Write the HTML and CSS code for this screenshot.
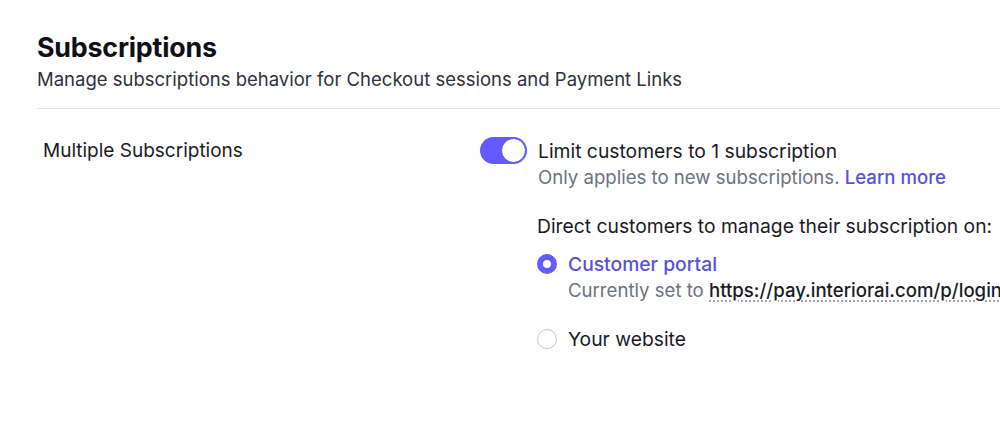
FILE: index.html
```html
<!DOCTYPE html>
<html>
<head>
<meta charset="utf-8">
<link rel="stylesheet" href="styles.css">
</head>
<body>
<div class="page">
  <header class="head">
    <h1 class="title">Subscriptions</h1>
    <p class="subtitle">Manage subscriptions behavior for Checkout sessions and Payment Links</p>
  </header>
  <div class="row">
    <div class="label">Multiple Subscriptions</div>
    <div class="control">
      <div class="toggle-line">
        <span class="toggle"><span class="knob"></span></span>
        <div class="toggle-text">
          <div class="main">Limit customers to 1 subscription</div>
          <div class="hint">Only applies to new subscriptions. <a class="link" href="#">Learn more</a></div>
        </div>
      </div>
      <div class="direct">
        <div class="main">Direct customers to manage their subscription on:</div>
        <div class="option">
          <span class="radio checked"></span>
          <div>
            <div class="opt-label active">Customer portal</div>
            <div class="hint">Currently set to <span class="url">https://pay.interiorai.com/p/login/abc</span></div>
          </div>
        </div>
        <div class="option second">
          <span class="radio"></span>
          <div>
            <div class="opt-label">Your website</div>
          </div>
        </div>
      </div>
    </div>
  </div>
</div>
</body>
</html>
```

FILE: styles.css
```css
html, body {
  margin: 0;
  padding: 0;
  background: #ffffff;
  overflow: hidden;
}
body {
  font-family: Inter, "Noto Sans", "Liberation Sans", sans-serif;
  color: #1a1b25;
  width: 1000px;
  height: 425px;
}
.page {
  padding: 31px 0 0 37px;
}
.head {
  border-bottom: 1px solid #e3e5ea;
  padding-bottom: 16px;
  margin-right: -40px;
}
.title {
  margin: 0;
  font-size: 26.8px;
  line-height: 32px;
  font-weight: 700;
  color: #0f1016;
  letter-spacing: -0.2px;
}
.subtitle {
  margin: 3px 0 0;
  font-size: 18.5px;
  line-height: 26px;
  color: #30313d;
}
.row {
  display: flex;
  padding-top: 29px;
}
.label {
  flex: none;
  box-sizing: border-box;
  width: 443px;
  padding-left: 6px;
  font-size: 19px;
  line-height: 26px;
  color: #1a1b25;
}
.control {
  flex: 1;
  min-width: 0;
  white-space: nowrap;
}
.toggle-line {
  display: flex;
  gap: 11px;
}
.toggle {
  position: relative;
  width: 47px;
  height: 27px;
  border-radius: 14px;
  background: #635bff;
  flex: none;
  margin-top: -1px;
}
.knob {
  position: absolute;
  right: 1px;
  top: 1px;
  box-sizing: border-box;
  width: 25px;
  height: 25px;
  border-radius: 50%;
  background: #fff;
  border: 1px solid #5951e8;
}
.main {
  font-size: 19.3px;
  line-height: 26px;
  color: #1a1b25;
}
.hint {
  font-size: 18.6px;
  line-height: 26px;
  color: #6a7383;
}
.link {
  color: #5851df;
  text-decoration: none;
  font-weight: 500;
}
.direct {
  padding-left: 57px;
  margin-top: 23px;
}
.option {
  display: flex;
  gap: 11px;
  margin-top: 12px;
}
.option.second {
  margin-top: 23px;
}
.radio {
  flex: none;
  box-sizing: border-box;
  width: 20px;
  height: 20px;
  border-radius: 50%;
  border: 1px solid #c5c8cf;
  margin-top: 3px;
  background: #fff;
}
.radio.checked {
  border: 6px solid #635bff;
}
.opt-label {
  font-size: 19.3px;
  line-height: 26px;
  color: #1a1b25;
}
.opt-label.active {
  color: #5851df;
  font-weight: 500;
}
.url {
  color: #1a1b25;
  font-weight: 500;
  text-decoration: underline dotted #9aa0ab;
  text-underline-offset: 4px;
}
```
